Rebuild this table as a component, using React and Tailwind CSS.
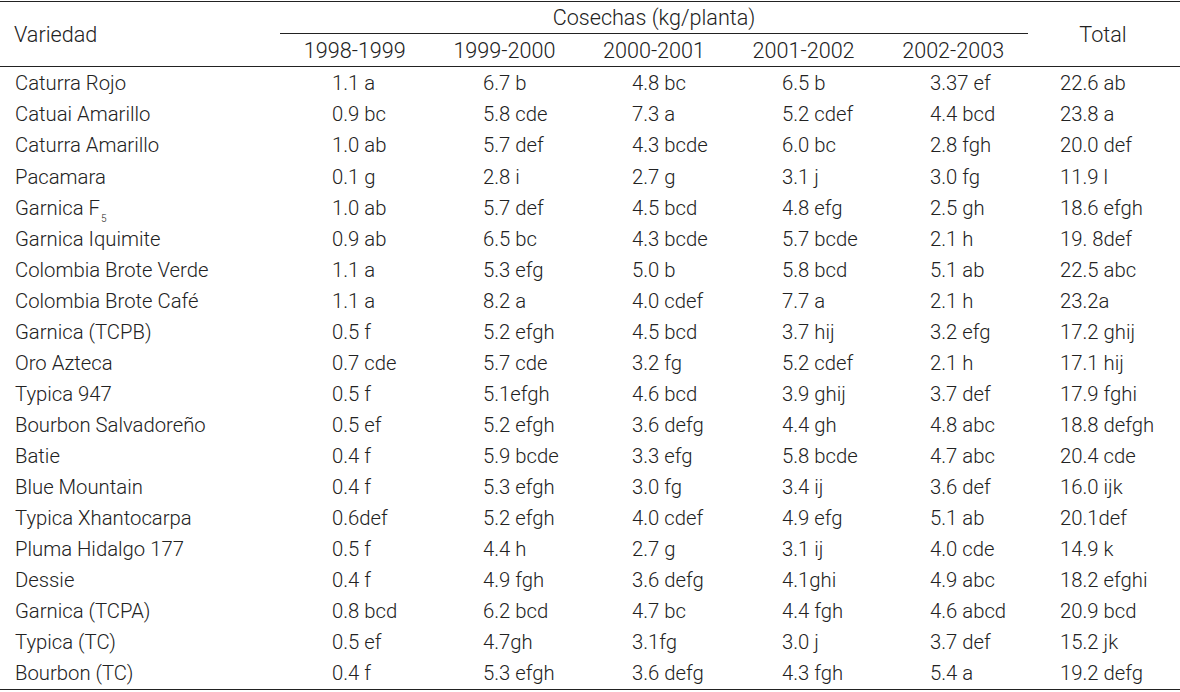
const rows = [
  ["Caturra Rojo", "1.1 a", "6.7 b", "4.8 bc", "6.5 b", "3.37 ef", "22.6 ab"],
  ["Catuai Amarillo", "0.9 bc", "5.8 cde", "7.3 a", "5.2 cdef", "4.4 bcd", "23.8 a"],
  ["Caturra Amarillo", "1.0 ab", "5.7 def", "4.3 bcde", "6.0 bc", "2.8 fgh", "20.0 def"],
  ["Pacamara", "0.1 g", "2.8 i", "2.7 g", "3.1 j", "3.0 fg", "11.9 l"],
  ["Garnica F5", "1.0 ab", "5.7 def", "4.5 bcd", "4.8 efg", "2.5 gh", "18.6 efgh"],
  ["Garnica Iquimite", "0.9 ab", "6.5 bc", "4.3 bcde", "5.7 bcde", "2.1 h", "19. 8def"],
  ["Colombia Brote Verde", "1.1 a", "5.3 efg", "5.0 b", "5.8 bcd", "5.1 ab", "22.5 abc"],
  ["Colombia Brote Café", "1.1 a", "8.2 a", "4.0 cdef", "7.7 a", "2.1 h", "23.2a"],
  ["Garnica (TCPB)", "0.5 f", "5.2 efgh", "4.5 bcd", "3.7 hij", "3.2 efg", "17.2 ghij"],
  ["Oro Azteca", "0.7 cde", "5.7 cde", "3.2 fg", "5.2 cdef", "2.1 h", "17.1 hij"],
  ["Typica 947", "0.5 f", "5.1efgh", "4.6 bcd", "3.9 ghij", "3.7 def", "17.9 fghi"],
  ["Bourbon Salvadoreño", "0.5 ef", "5.2 efgh", "3.6 defg", "4.4 gh", "4.8 abc", "18.8 defgh"],
  ["Batie", "0.4 f", "5.9 bcde", "3.3 efg", "5.8 bcde", "4.7 abc", "20.4 cde"],
  ["Blue Mountain", "0.4 f", "5.3 efgh", "3.0 fg", "3.4 ij", "3.6 def", "16.0 ijk"],
  ["Typica Xhantocarpa", "0.6def", "5.2 efgh", "4.0 cdef", "4.9 efg", "5.1 ab", "20.1def"],
  ["Pluma Hidalgo 177", "0.5 f", "4.4 h", "2.7 g", "3.1 ij", "4.0 cde", "14.9 k"],
  ["Dessie", "0.4 f", "4.9 fgh", "3.6 defg", "4.1ghi", "4.9 abc", "18.2 efghi"],
  ["Garnica (TCPA)", "0.8 bcd", "6.2 bcd", "4.7 bc", "4.4 fgh", "4.6 abcd", "20.9 bcd"],
  ["Typica (TC)", "0.5 ef", "4.7gh", "3.1fg", "3.0 j", "3.7 def", "15.2 jk"],
  ["Bourbon (TC)", "0.4 f", "5.3 efgh", "3.6 defg", "4.3 fgh", "5.4 a", "19.2 defg"],
];

const years = ["1998-1999", "1999-2000", "2000-2001", "2001-2002", "2002-2003"];

const cols = "grid grid-cols-[280px_150px_150px_150px_150px_148px_152px]";
const pads = ["pl-[15px]", "pl-[52px]", "pl-[53px]", "pl-[52px]", "pl-[52px]", "pl-[50px]", "pl-[32px]"];

function Name({ text }) {
  if (text === "Garnica F5") {
    return (
      <span>
        Garnica F<sub className="text-[10px] relative top-[7px] left-[1px] align-baseline">5</sub>
      </span>
    );
  }
  return <span>{text}</span>;
}

export default function App() {
  return (
    <div
      className="w-[1180px] h-[692px] bg-white text-[#222] text-[20.3px] font-light leading-none"
      style={{ fontFamily: "Roboto, 'Liberation Sans', sans-serif" }}
    >
      <div className="pt-[1px]">
        <div className="border-t border-b border-[#222] text-[21.6px]">
          <div className="flex">
            <div className="w-[280px] flex items-center pl-[14px] pt-[2px]">Variedad</div>
            <div className="w-[748px] flex flex-col">
              <div className="h-[32px] border-b border-[#222] flex items-center justify-center">
                Cosechas (kg/planta)
              </div>
              <div className="h-[32px] grid grid-cols-5 pt-[1px]">
                {years.map((y) => (
                  <div key={y} className="flex items-center justify-center">
                    {y}
                  </div>
                ))}
              </div>
            </div>
            <div className="flex-1 flex items-center justify-center pr-[2px] pt-[2px]">Total</div>
          </div>
        </div>
        <div className="border-b border-[#222] pt-[1px]">
          {rows.map((r) => (
            <div key={r[0]} className={cols + " h-[31.05px] items-center"}>
              {r.map((c, i) => (
                <div key={i} className={pads[i] + " whitespace-nowrap"}>
                  {i === 0 ? <Name text={c} /> : c}
                </div>
              ))}
            </div>
          ))}
        </div>
      </div>
    </div>
  );
}
